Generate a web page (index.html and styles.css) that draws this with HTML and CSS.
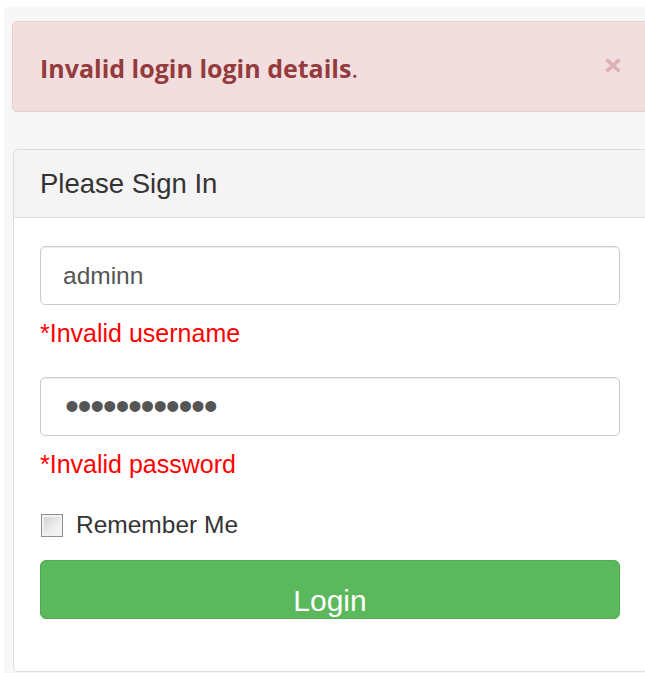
FILE: index.html
```html
<!DOCTYPE html>
<html lang="en">
<head>
<meta charset="utf-8">
<title>Please Sign In</title>
<link rel="stylesheet" href="styles.css">
</head>
<body>
<div class="page">
  <div class="alert alert-danger" role="alert">
    <span class="alert-text"><strong>Invalid login login details</strong>.</span>
    <button type="button" class="close" aria-label="Close">
      <svg width="18" height="17" viewBox="0 0 18 17" aria-hidden="true">
        <path d="M2.5 2.5 L15.5 14.5 M15.5 2.5 L2.5 14.5" stroke="currentColor" stroke-width="3.6" stroke-linecap="butt" fill="none"/>
      </svg>
    </button>
  </div>

  <div class="panel">
    <div class="panel-heading">
      <h3 class="panel-title">Please Sign In</h3>
    </div>
    <div class="panel-body">
      <form class="login-form">
        <input class="form-control" type="text" name="username" value="adminn">
        <p class="field-error">*Invalid username</p>
        <input class="form-control password" type="password" name="password" value="adminadmin12">
        <p class="field-error">*Invalid password</p>
        <label class="remember">
          <input type="checkbox" name="remember" class="check">
          <span>Remember Me</span>
        </label>
        <button type="submit" class="btn-login">Login</button>
      </form>
    </div>
  </div>
</div>
</body>
</html>
```
FILE: styles.css
```css
html, body {
  margin: 0;
  padding: 0;
  background: #ffffff;
  height: 100%;
  overflow: hidden;
}

.page {
  margin: 7px 0 0 4px;
  padding: 14px 0 0 8px;
  background: #f7f7f7;
  min-height: 700px;
  font-family: "Liberation Sans", Arial, sans-serif;
  color: #333;
}

/* error banner */
.alert {
  display: flex;
  align-items: center;
  justify-content: space-between;
  box-sizing: border-box;
  height: 91px;
  margin-right: -12px;
  padding: 0 34px 0 27px;
  background: #f2dede;
  border: 1px solid #ebccd1;
  border-radius: 5px;
  color: #943b3d;
  font-family: "Open Sans", "Liberation Sans", sans-serif;
  font-size: 25px;
}

.alert-text {
  margin-top: 2px;
}

.alert-text strong {
  font-weight: 700;
}

.close {
  display: flex;
  padding: 0;
  margin: 0 0 3px 0;
  border: 0;
  background: transparent;
  color: #dcb1b4;
  cursor: pointer;
}

/* sign-in panel */
.panel {
  margin: 37px -3px 0 1px;
  background: #ffffff;
  border: 1px solid #dddddd;
  border-radius: 5px;
}

.panel-heading {
  padding: 19px 26px 18px;
  background: #f4f4f4;
  border-bottom: 1px solid #dddddd;
  border-radius: 5px 5px 0 0;
}

.panel-title {
  margin: 0;
  font-size: 27.5px;
  font-weight: 400;
  line-height: 30px;
  color: #333;
}

.panel-body {
  padding: 28px 27px 52px 26px;
}

.login-form {
  display: flex;
  flex-direction: column;
}

.form-control {
  box-sizing: border-box;
  width: 100%;
  height: 59px;
  margin: 0;
  padding: 0 22px;
  border: 1px solid #cccccc;
  border-radius: 5px;
  box-shadow: inset 0 1px 1px rgba(0, 0, 0, 0.075);
  background: #ffffff;
  color: #555555;
  font-family: "Liberation Sans", Arial, sans-serif;
  font-size: 24.5px;
  outline: none;
}

.form-control.password {
  padding-left: 24px;
  font-size: 40px;
  letter-spacing: -1.4px;
  color: #555555;
}

.field-error {
  margin: 14px 0 30px;
  font-size: 25px;
  line-height: 28px;
  color: #ff0000;
}

.field-error:nth-of-type(2) {
  margin-bottom: 35px;
}

.remember {
  display: flex;
  align-items: center;
  gap: 13px;
  height: 24px;
  font-size: 24.5px;
  line-height: 24px;
  color: #333;
}

.check {
  -webkit-appearance: none;
  appearance: none;
  box-sizing: border-box;
  width: 22px;
  height: 23px;
  margin: 0 0 0 1px;
  border: 1px solid #8e8e8e;
  background: linear-gradient(135deg, #cfcfcf 0%, #ebebeb 55%, #fbfbfb 100%);
  box-shadow: inset 0 0 0 2px #f2f2f2;
}

.btn-login {
  box-sizing: border-box;
  width: 100%;
  height: 59px;
  margin-top: 23px;
  padding: 25px 0 3px;
  background: #5cb85c;
  border: 1px solid #4cae4c;
  border-radius: 6px;
  color: #ffffff;
  font-family: "Liberation Sans", Arial, sans-serif;
  font-size: 30px;
  line-height: 29px;
  cursor: pointer;
}
```
